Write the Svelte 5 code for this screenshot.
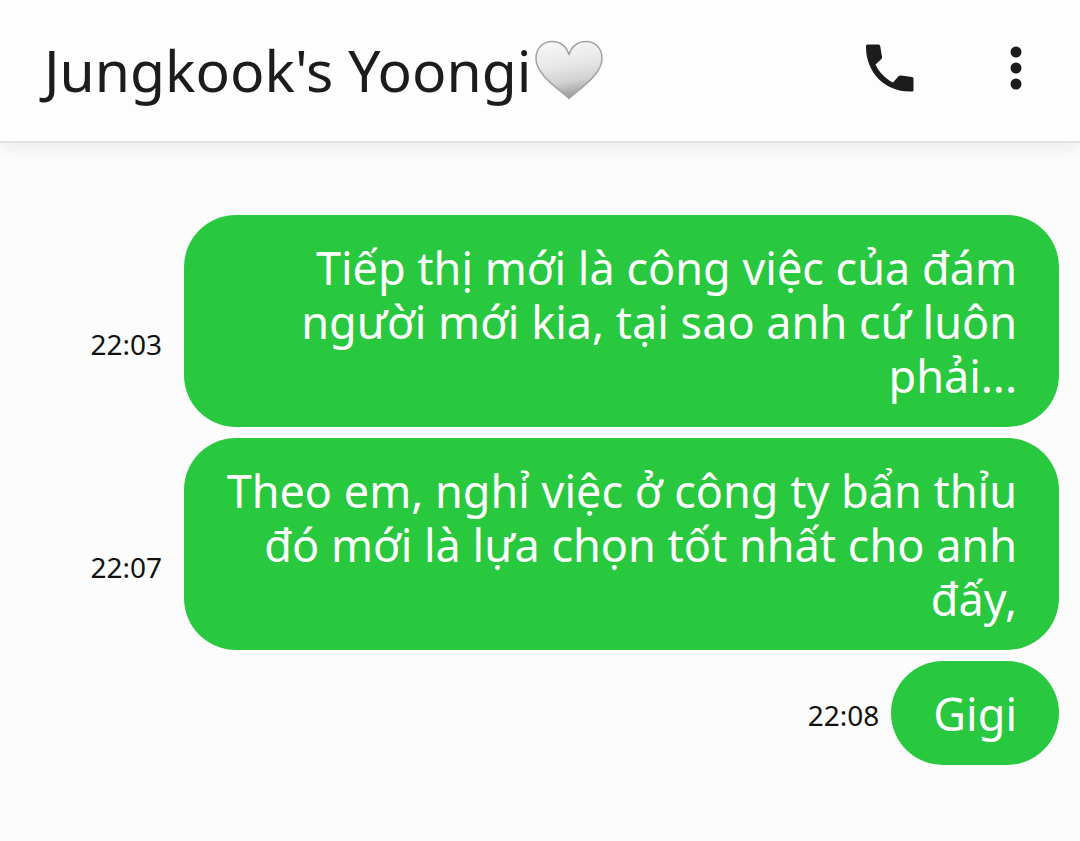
<script>
    let { name = "Jungkook's Yoongi" } = $props();

    const messages = [
        {
            time: "22:03",
            text: "Tiếp thị mới là công việc của đám người mới kia, tại sao anh cứ luôn phải...",
        },
        {
            time: "22:07",
            text: "Theo em, nghỉ việc ở công ty bẩn thỉu đó mới là lựa chọn tốt nhất cho anh đấy,",
        },
        { time: "22:08", text: "Gigi", short: true },
    ];
</script>

<main class="chat">
    <header class="topbar">
        <h1 class="name">{name}</h1>
        <svg class="heart" viewBox="0 0 68 60" role="img" aria-label="white heart">
            <defs>
                <linearGradient id="heart-fill" x1="0.35" y1="0" x2="0.55" y2="1">
                    <stop offset="0" stop-color="#f6f6f6" />
                    <stop offset="0.4" stop-color="#e8e8e8" />
                    <stop offset="0.7" stop-color="#d2d2d2" />
                    <stop offset="1" stop-color="#949494" />
                </linearGradient>
            </defs>
            <path
                d="M34 58.5C24 49 1 35 1 18.5C1 8 8 1.5 17 1.5C25.5 1.5 32 6.500 34 15C36 6.5 42.5 1.5 51 1.5C60 1.5 67 8 67 18.5C67 35 44 49 34 58.5Z"
                fill="url(#heart-fill)"
                stroke="#a2a2a2"
                stroke-width="1.5"
            />
        </svg>
        <div class="actions">
            <button class="action" aria-label="Call">
                <svg viewBox="0 0 48 48">
                    <path
                        d="M1.5 0.5H12.5Q14 0.5 14.2 2L16 13Q16.2 14.3 15.2 15.2L9.5 20.5C13 28 19 34.5 27 38.5L32.5 32.3Q33.5 31.3 35 31.5L46 33Q47.5 33.2 47.5 34.7V46Q47.5 47.5 46 47.5C18 48.5 -0.5 27 0 2Q0 0.5 1.5 0.5Z"
                    />
                </svg>
            </button>
            <button class="action" aria-label="More options">
                <svg viewBox="0 0 48 48">
                    <circle cx="24" cy="8" r="5.5" />
                    <circle cx="24" cy="24" r="5.5" />
                    <circle cx="24" cy="40" r="5.5" />
                </svg>
            </button>
        </div>
    </header>

    <ul class="messages">
        {#each messages as message}
            <li class="message" class:short={message.short}>
                <time class="time">{message.time}</time>
                <p class="bubble">{message.text}</p>
            </li>
        {/each}
    </ul>
</main>

<style>
    :global(body) {
        background: #fcfcfc;
    }

    .chat {
        font-family: "Noto Sans", sans-serif;
        color: #1c1c1c;
    }

    .topbar {
        display: flex;
        align-items: center;
        box-sizing: border-box;
        height: 143px;
        padding: 0 40px 2px 44px;
        background: #fdfdfd;
        border-bottom: 2px solid #e2e2e2;
        box-shadow: 0 4px 16px rgba(0, 0, 0, 0.08);
    }

    .name {
        margin: 0;
        font-size: 57px;
        font-weight: 400;
        line-height: 72px;
        white-space: nowrap;
    }

    .heart {
        flex: none;
        width: 68px;
        height: 60px;
        margin-left: 3px;
    }

    .actions {
        display: flex;
        gap: 78px;
        margin-left: auto;
        padding-bottom: 4px;
    }

    .action {
        width: 48px;
        height: 48px;
        padding: 0;
        border: 0;
        background: none;
        cursor: pointer;
    }

    .action svg {
        display: block;
        fill: #1c1c1c;
    }

    .messages {
        display: grid;
        gap: 11px;
        margin: 0;
        padding: 72px 21px 76px 0;
        list-style: none;
    }

    .message {
        display: flex;
        align-items: flex-end;
        justify-content: flex-end;
        gap: 22px;
    }

    .message.short {
        gap: 12px;
    }

    .time {
        padding-bottom: 65px;
        font-size: 28px;
        line-height: 36px;
        color: #111;
    }

    .short .time {
        padding-bottom: 32px;
    }

    .bubble {
        box-sizing: border-box;
        max-width: calc(100% - 184px);
        margin: 0;
        padding: 26px 42px 24px;
        border-radius: 52px;
        background: #28c93e;
        color: #fff;
        font-size: 45px;
        line-height: 54px;
        text-align: right;
    }
</style>
